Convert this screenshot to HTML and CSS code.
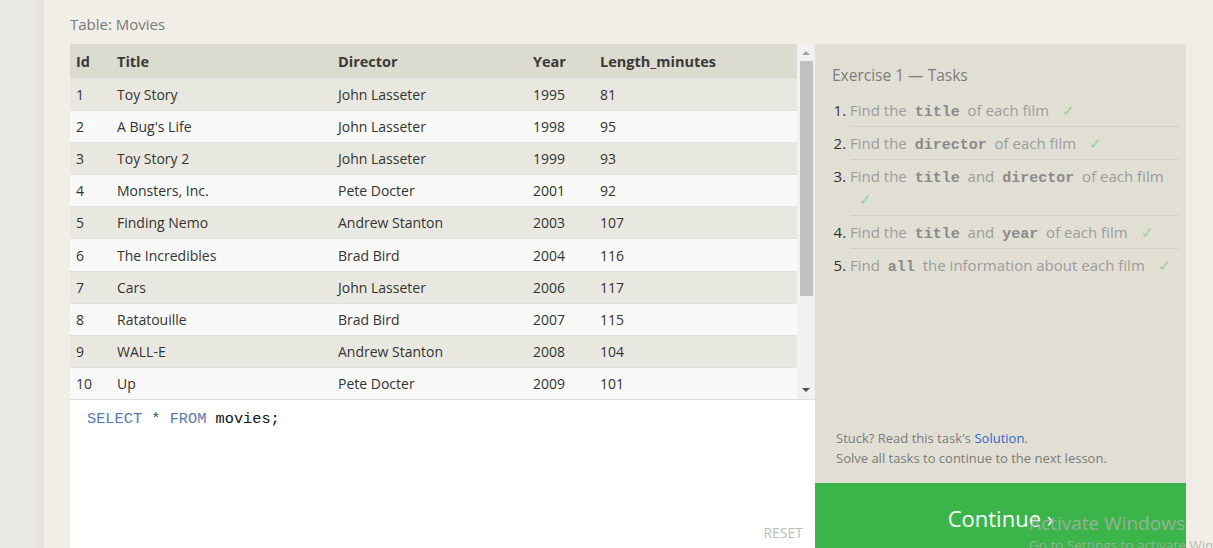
FILE: index.html
```html
<!DOCTYPE html>
<html>
<head>
<meta charset="utf-8">
<link rel="stylesheet" href="styles.css">
</head>
<body>
<div class="page">
  <div class="side"></div>
  <main class="main">
    <div class="caption">Table: Movies</div>
    <div class="workspace">
      <div class="left">
        <div class="table-wrap">
          <table class="movies">
            <colgroup>
              <col class="c-id"><col class="c-title"><col class="c-dir"><col class="c-year"><col class="c-len">
            </colgroup>
            <thead>
              <tr><th>Id</th><th>Title</th><th>Director</th><th>Year</th><th>Length_minutes</th></tr>
            </thead>
            <tbody>
              <tr><td>1</td><td>Toy Story</td><td>John Lasseter</td><td>1995</td><td>81</td></tr>
              <tr><td>2</td><td>A Bug's Life</td><td>John Lasseter</td><td>1998</td><td>95</td></tr>
              <tr><td>3</td><td>Toy Story 2</td><td>John Lasseter</td><td>1999</td><td>93</td></tr>
              <tr><td>4</td><td>Monsters, Inc.</td><td>Pete Docter</td><td>2001</td><td>92</td></tr>
              <tr><td>5</td><td>Finding Nemo</td><td>Andrew Stanton</td><td>2003</td><td>107</td></tr>
              <tr><td>6</td><td>The Incredibles</td><td>Brad Bird</td><td>2004</td><td>116</td></tr>
              <tr><td>7</td><td>Cars</td><td>John Lasseter</td><td>2006</td><td>117</td></tr>
              <tr><td>8</td><td>Ratatouille</td><td>Brad Bird</td><td>2007</td><td>115</td></tr>
              <tr><td>9</td><td>WALL-E</td><td>Andrew Stanton</td><td>2008</td><td>104</td></tr>
              <tr><td>10</td><td>Up</td><td>Pete Docter</td><td>2009</td><td>101</td></tr>
            </tbody>
          </table>
          <div class="scrollbar">
            <div class="arrow up"></div>
            <div class="track"><div class="thumb"></div></div>
            <div class="arrow down"></div>
          </div>
        </div>
        <div class="editor">
          <div class="code"><span class="kw">SELECT</span> <span class="op">*</span> <span class="kw">FROM</span> movies;</div>
          <div class="reset">RESET</div>
        </div>
      </div>
      <aside class="tasks">
        <div class="tasks-body">
          <h2 class="tasks-title">Exercise 1 — Tasks</h2>
          <ol class="task-list">
            <li>Find the <code>title</code> of each film <span class="check">✓</span></li>
            <li>Find the <code>director</code> of each film <span class="check">✓</span></li>
            <li>Find the <code>title</code> and <code>director</code> of each film <span class="check">✓</span></li>
            <li>Find the <code>title</code> and <code>year</code> of each film <span class="check">✓</span></li>
            <li>Find <code>all</code> the information about each film <span class="check">✓</span></li>
          </ol>
        </div>
        <div class="notes">
          <p>Stuck? Read this task's <a class="link">Solution</a>.</p>
          <p>Solve all tasks to continue to the next lesson.</p>
        </div>
        <div class="continue">Continue ›</div>
      </aside>
    </div>
  </main>
</div>
<div class="watermark">
  <div class="wm-title">Activate Windows</div>
  <div class="wm-sub">Go to Settings to activate Windows.</div>
</div>
</body>
</html>
```

FILE: styles.css
```css
html, body {
  margin: 0;
  padding: 0;
  height: 548px;
  overflow: hidden;
}
body {
  font-family: "Open Sans", "Noto Sans", sans-serif;
  background: #ebe9e5;
  position: relative;
}
.page {
  display: flex;
  height: 548px;
}
.side {
  width: 44px;
  flex: none;
  background: linear-gradient(to right, #ebe9e5 0, #ebe9e5 30px, #e1dedb 44px);
}
.main {
  flex: 1;
  background: #f0eee6;
  padding: 0 27px 0 26px;
  display: flex;
  flex-direction: column;
}
.caption {
  font-size: 15px;
  color: #7a7a7a;
  line-height: 20px;
  padding-top: 14px;
  height: 30px;
}
.workspace {
  display: flex;
  flex: 1;
  min-height: 0;
}
.left {
  width: 745px;
  flex: none;
  display: flex;
  flex-direction: column;
}
.table-wrap {
  display: flex;
  height: 355px;
  background: #f8f8f8;
  border-bottom: 1px solid #dedede;
}
.movies {
  width: 727px;
  height: 355px;
  table-layout: fixed;
  border-collapse: collapse;
  font-size: 14px;
  color: #333;
}
.c-id { width: 41px; }
.c-title { width: 221px; }
.c-dir { width: 195px; }
.c-year { width: 67px; }
.c-len { width: 203px; }
.movies th {
  background: #dcdbcf;
  text-align: left;
  font-weight: 700;
  font-size: 14.5px;
  height: 34px;
  padding: 0 0 0 6px;
  color: #3a3a3a;
}
.movies td {
  height: 31px;
  padding: 0 0 0 6px;
  border-top: 1px solid #e0e0e0;
  white-space: nowrap;
}
.movies tbody tr:nth-child(odd) td { background: #e9e8e0; }
.movies tbody tr:nth-child(even) td { background: #f9f9f9; }
.scrollbar {
  width: 18px;
  flex: none;
  background: #f1f1f1;
  display: flex;
  flex-direction: column;
  align-items: center;
}
.arrow {
  width: 0;
  height: 0;
  border-left: 4px solid transparent;
  border-right: 4px solid transparent;
}
.arrow.up {
  border-bottom: 4px solid #a3a3a3;
  margin: 7px 0 6px;
}
.arrow.down {
  border-top: 4px solid #505050;
  margin: 6px 0 7px;
}
.track {
  flex: 1;
  width: 100%;
  display: flex;
  justify-content: center;
}
.thumb {
  width: 13px;
  height: 235px;
  background: #c1c1c1;
}
.editor {
  flex: 1;
  background: #fff;
  display: flex;
  flex-direction: column;
  padding: 9px 12px 7px 17px;
}
.code {
  font-family: "Liberation Mono", "DejaVu Sans Mono", monospace;
  font-size: 15.3px;
  line-height: 20px;
  color: #111;
}
.kw { color: #5a78b5; }
.op { color: #3d4660; }
.reset {
  margin-top: auto;
  align-self: flex-end;
  font-size: 14px;
  color: #bdbdbd;
  line-height: 16px;
}
.tasks {
  width: 371px;
  flex: none;
  background: #e1dfd4;
  display: flex;
  flex-direction: column;
}
.tasks-body {
  padding: 19px 7px 0 17px;
  flex: 1;
}
.tasks-title {
  margin: 0 0 7px;
  font-size: 15.5px;
  font-weight: 400;
  color: #7c7c7c;
  line-height: 24px;
}
.task-list {
  margin: 0;
  padding: 0 0 0 18px;
  font-size: 15px;
  color: #9c9c9c;
}
.task-list li {
  line-height: 23px;
  padding: 5px 0 4px;
  border-bottom: 1px solid #d4d2c6;
}
.task-list li:last-child { border-bottom: none; }
.task-list li::marker { color: #333; }
.task-list code {
  font-family: "Liberation Mono", "DejaVu Sans Mono", monospace;
  font-weight: 700;
  font-size: 15px;
  line-height: 1;
  color: #8a8a8a;
  padding: 0 4px;
}
.check {
  color: #93cf93;
  margin-left: 9px;
}
.notes {
  padding: 0 17px 15px 21px;
  font-size: 13px;
  color: #7a7a7a;
  line-height: 20px;
}
.notes p { margin: 0; }
.link { color: #3366cc; }
.continue {
  height: 65px;
  flex: none;
  background: #3bb54a;
  color: #fff;
  font-size: 22px;
  text-align: center;
  line-height: 70px;
  overflow: hidden;
}
.watermark {
  position: absolute;
  left: 1029px;
  top: 510px;
  color: rgba(170, 175, 170, 0.85);
  white-space: nowrap;
}
.wm-title {
  font-size: 19px;
  line-height: 26px;
}
.wm-sub {
  font-size: 13.5px;
  line-height: 18px;
}
```
